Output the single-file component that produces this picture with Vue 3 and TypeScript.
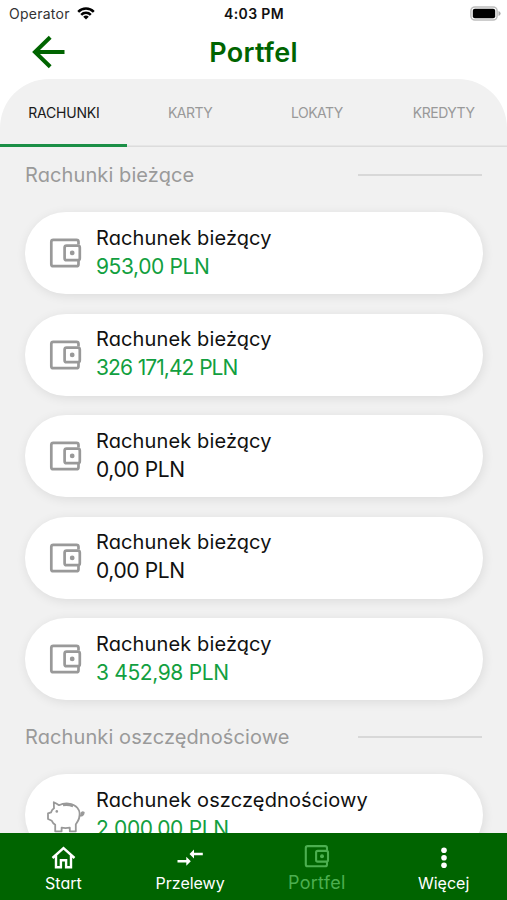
<script setup lang="ts">
interface Account {
  name: string
  amount: string
  positive: boolean
}

interface Section {
  title: string
  icon: 'wallet' | 'piggy'
  accounts: Account[]
}

const tabs: { label: string; key: string }[] = [
  { label: 'RACHUNKI', key: 'tab-accounts' },
  { label: 'KARTY', key: 'tab-cards' },
  { label: 'LOKATY', key: 'tab-deposits' },
  { label: 'KREDYTY', key: 'tab-loans' },
]
const activeTab = 'tab-accounts'

const sections: Section[] = [
  {
    title: 'Rachunki bieżące',
    icon: 'wallet',
    accounts: [
      { name: 'Rachunek bieżący', amount: '953,00 PLN', positive: true },
      { name: 'Rachunek bieżący', amount: '326 171,42 PLN', positive: true },
      { name: 'Rachunek bieżący', amount: '0,00 PLN', positive: false },
      { name: 'Rachunek bieżący', amount: '0,00 PLN', positive: false },
      { name: 'Rachunek bieżący', amount: '3 452,98 PLN', positive: true },
    ],
  },
  {
    title: 'Rachunki oszczędnościowe',
    icon: 'piggy',
    accounts: [{ name: 'Rachunek oszczędnościowy', amount: '2 000,00 PLN', positive: true }],
  },
]

const navItems: { label: string; key: string }[] = [
  { label: 'Start', key: 'home' },
  { label: 'Przelewy', key: 'transfers' },
  { label: 'Portfel', key: 'wallet' },
  { label: 'Więcej', key: 'more' },
]
const activeNav = 'wallet'
</script>

<template>
  <div class="screen">
    <div class="status">
      <div class="carrier">
        <span class="operator">Operator</span>
        <svg class="wifi" width="18" height="14" viewBox="0 0 18 14">
          <path d="M0.3 4.9 A12.3 12.3 0 0 1 17.7 4.9 L15.9 6.7 A9.8 9.8 0 0 0 2.1 6.7 Z" />
          <path d="M3.3 7.9 A8 8 0 0 1 14.7 7.9 L12.9 9.7 A5.5 5.5 0 0 0 5.1 9.7 Z" />
          <path d="M6.2 10.8 A4 4 0 0 1 11.8 10.8 L9 13.6 Z" />
        </svg>
      </div>
      <span class="time">4:03 PM</span>
      <svg class="battery" width="31" height="15" viewBox="0 0 31 15">
        <rect x="0.9" y="0.9" width="26.2" height="13.2" rx="4" fill="#fff" stroke="#bdbdbd" stroke-width="1.5" />
        <rect x="2.8" y="2.8" width="22.4" height="9.4" rx="2" fill="#000" />
        <path d="M28.5 5 Q30.6 5.8 30.6 7.5 Q30.6 9.2 28.5 10 Z" fill="#a8a8a8" />
      </svg>
    </div>

    <header class="header">
      <svg class="back" width="34" height="34" viewBox="0 0 34 34">
        <path d="M32.5 17 H3 M18.2 2.2 L3 17 L18.2 31.8" />
      </svg>
      <h1 class="title">Portfel</h1>
    </header>

    <main class="panel">
      <nav class="tabs">
        <span v-for="t in tabs" :key="t.key" class="tab" :class="[t.key, { active: t.key === activeTab }]">{{ t.label }}</span>
      </nav>

      <section v-for="s in sections" :key="s.title" class="section">
        <div class="section-head">
          <h2 class="section-title">{{ s.title }}</h2>
          <span class="rule"></span>
        </div>
        <div class="cards">
          <article v-for="(a, i) in s.accounts" :key="i" class="card">
            <svg v-if="s.icon === 'wallet'" class="icon" width="36" height="32" viewBox="0 0 36 32">
              <path d="M31.5 7.5 V4.8 Q31.5 2.8 29.5 2.8 H6.3 Q4.3 2.8 4.3 4.8 V27.2 Q4.3 29.2 6.3 29.2 H29.5 Q31.5 29.2 31.5 27.2 V24" />
              <rect x="17.6" y="8.6" width="15.2" height="14.6" rx="2" />
              <circle cx="25.2" cy="15.9" r="2.4" fill="#999" stroke="none" />
            </svg>
            <svg v-else class="icon pig" width="40" height="34" viewBox="0 0 40 34">
              <path d="M8.8 2.2 C11 3.2 12.7 4.2 14 5.2 C19 2.7 28 2.4 32.3 7.8 C33.7 9.5 34.4 11.2 34.6 13 C35.2 19 32.4 22 30.8 24.3 V31.3 H24.8 V27.7 C22.3 28.1 18.7 28.1 16.6 27.7 V31.3 H10.2 V24.8 C8.5 23.6 7.5 22.4 6.8 20.8 L3 19 V13.3 L6 12.4 C6.5 10.8 7.4 9.3 9 8.2 Z" />
              <path d="M18 5.2 Q23 4.2 28 6.2" stroke-width="2.2" />
              <path d="M34.6 15.5 Q38.2 16.3 38.8 12.5 Q36.5 11.2 36.2 14.5" fill="#999" />
              <circle cx="11.8" cy="11.4" r="1.3" fill="#999" stroke="none" />
            </svg>
            <div class="info">
              <span class="name">{{ a.name }}</span>
              <span class="amount" :class="{ positive: a.positive, narrow: a.amount.includes('1') }">{{ a.amount }}</span>
            </div>
          </article>
        </div>
      </section>
    </main>

    <footer class="nav">
      <div v-for="n in navItems" :key="n.key" class="nav-item" :class="{ active: n.key === activeNav }">
        <svg v-if="n.key === 'home'" class="nav-icon" width="28" height="26" viewBox="0 0 28 26">
          <path d="M3.5 14 L14.5 4.2 L25.5 14 M7 11.7 V23.2 H11.9 V16.2 H17.1 V23.2 H22 V11.7" fill="none" stroke="#fff" stroke-width="2.4" />
        </svg>
        <svg v-else-if="n.key === 'transfers'" class="nav-icon" width="28" height="26" viewBox="0 0 28 26">
          <path d="M1.5 16 H10.3 V12.8 L14.8 17.3 L10.3 21.8 V18.6 H1.5 Z M26.8 8.7 H18 V5.5 L13.5 10 L18 14.5 V11.3 H26.8 Z" fill="#fff" />
        </svg>
        <svg v-else-if="n.key === 'wallet'" class="nav-icon" width="28" height="26" viewBox="0 0 28 26">
          <g fill="none" stroke="#4caf50" stroke-width="2.1">
            <path d="M24 6.5 V3.9 Q24 2.1 22.2 2.1 H4.6 Q2.8 2.1 2.8 3.9 V20.4 Q2.8 22.2 4.6 22.2 H22.2 Q24 22.2 24 20.4 V18" />
            <rect x="13.1" y="6.9" width="11.9" height="10.7" rx="1.6" />
          </g>
          <circle cx="19" cy="12.2" r="2" fill="#4caf50" />
        </svg>
        <svg v-else class="nav-icon" width="28" height="26" viewBox="0 0 28 26" fill="#fff">
          <circle cx="14" cy="6.2" r="2.8" />
          <circle cx="14" cy="13.7" r="2.8" />
          <circle cx="14" cy="21.2" r="2.8" />
        </svg>
        <span class="nav-label">{{ n.label }}</span>
      </div>
    </footer>
  </div>
</template>

<style>
body {
  margin: 0;
  background: #fff;
  overflow: hidden;
}
</style>

<style scoped>
.screen {
  width: 507px;
  height: 900px;
  display: flex;
  flex-direction: column;
  overflow: hidden;
  background: #fff;
  font-family: Inter, 'Open Sans', sans-serif;
  font-feature-settings: 'cv11' 1;
  color: #111;
  white-space: nowrap;
}
.status {
  height: 27px;
  flex: none;
  display: grid;
  grid-template-columns: 1fr auto 1fr;
  align-items: center;
  padding: 0 6px 0 9px;
  box-sizing: border-box;
  font-feature-settings: normal;
}
.carrier {
  display: flex;
  align-items: center;
  gap: 7px;
}
.operator {
  font-size: 14px;
  line-height: 20px;
  letter-spacing: 0.25px;
  color: #333;
}
.wifi {
  display: block;
  margin-top: -2px;
}
.time {
  font-size: 14px;
  line-height: 20px;
  font-weight: 600;
  letter-spacing: 0.35px;
  margin-right: 2px;
}
.battery {
  justify-self: end;
}
.header {
  height: 52px;
  flex: none;
  display: grid;
  grid-template-columns: 66px 1fr 66px;
  align-items: center;
}
.back {
  margin: -3px 0 0 32px;
  fill: none;
  stroke: #006400;
  stroke-width: 4;
}
.title {
  margin: 0;
  text-align: center;
  font-size: 27px;
  line-height: 50px;
  font-weight: 600;
  letter-spacing: 0.3px;
  color: #006400;
}
.panel {
  flex: 1;
  min-height: 0;
  overflow: hidden;
  background: #f1f1f1;
  border-radius: 49px 49px 0 0;
}
.tabs {
  height: 68px;
  display: grid;
  grid-template-columns: repeat(4, 1fr);
  box-sizing: border-box;
  box-shadow: inset 0 -1.5px #dcdcdc;
}
.tab {
  text-align: center;
  font-size: 14px;
  line-height: 68px;
  letter-spacing: -0.5px;
  color: #999;
}
.tab.active {
  color: #1a1a1a;
  letter-spacing: -0.2px;
  padding-left: 1px;
  box-shadow: inset 0 -3px #1b8f46;
}
.section-head {
  height: 57px;
  display: flex;
  align-items: center;
  justify-content: space-between;
  padding: 0 25px;
}
.section-title {
  margin: 0;
  font-size: 20px;
  line-height: 57px;
  font-weight: 400;
  letter-spacing: 0.1px;
  color: #9a9a9a;
}
.rule {
  width: 124px;
  height: 2px;
  margin-top: -1px;
  background: #d8d8d8;
}
.cards {
  display: flex;
  flex-direction: column;
  gap: 19.5px;
  padding: 8px 24.5px 9px 25px;
}
.card {
  height: 82px;
  flex: none;
  box-sizing: border-box;
  display: flex;
  align-items: center;
  padding-left: 22px;
  background: #fff;
  border-radius: 41px;
  box-shadow: 1px 2px 11px rgba(0, 0, 0, 0.09);
}
.icon {
  flex: none;
  width: 36px;
  margin-right: 13px;
  fill: none;
  stroke: #999;
  stroke-width: 2.7;
}
.pig {
  width: 40px;
  margin: 4px 11px 0 -2px;
  stroke-width: 1.8;
  stroke-linejoin: round;
}
.info {
  display: flex;
  flex-direction: column;
  margin-top: -1.2px;
}
.name {
  font-size: 20px;
  line-height: 28px;
  letter-spacing: 0.12px;
}
.amount {
  font-size: 21px;
  line-height: 29px;
  letter-spacing: -0.4px;
  word-spacing: 0.2px;
}
.amount.narrow {
  letter-spacing: -0.95px;
  word-spacing: 0.8px;
}
.amount.positive {
  color: #129f40;
}
.nav {
  height: 67px;
  flex: none;
  display: grid;
  grid-template-columns: repeat(4, 1fr);
  background: #006400;
  color: #fff;
}
.nav-item {
  display: flex;
  flex-direction: column;
  align-items: center;
  padding-top: 11px;
}
.nav-icon {
  display: block;
}
.nav-label {
  font-size: 16px;
  line-height: 26px;
}
.nav-item.active .nav-label {
  color: #4caf50;
  font-size: 18px;
  letter-spacing: 0.3px;
}
</style>
